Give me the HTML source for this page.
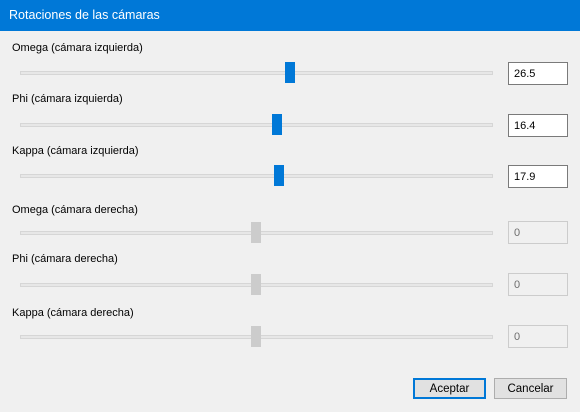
<!DOCTYPE html>
<html><head><meta charset="utf-8"><style>
*{margin:0;padding:0;box-sizing:border-box}
body{width:580px;height:412px;background:#f0f0f0;font-family:"Liberation Sans",sans-serif;font-size:11px;color:#000;position:relative;overflow:hidden}
.title{position:absolute;left:0;top:0;width:580px;height:31px;background:#0078d7;color:#fff;font-size:12.5px;line-height:31px;padding-left:9px}
.lbl{position:absolute;left:12px}
.trk{position:absolute;left:20px;width:473px;height:4px;background:#e7e7e7;border:1px solid #d6d6d6}
.th{position:absolute;width:10px;height:21px;background:#0078d7}
.th.d{background:#cccccc}
.tb{position:absolute;left:508px;width:60px;height:23px;background:#fff;border:1px solid #7a7a7a;padding-left:5px;padding-top:1px;line-height:21px;font-size:11px}
.tb.d{background:#f0f0f0;border-color:#cccccc;color:#6d6d6d}
.btn{position:absolute;top:378px;width:73px;height:21px;background:#e1e1e1;border:1px solid #adadad;text-align:center;line-height:21px;font-size:11.5px}
</style></head><body>
<div class="title">Rotaciones de las cámaras</div>

<div class="lbl" style="top:42px">Omega (cámara izquierda)</div>
<div class="trk" style="top:71px"></div><div class="th" style="left:285px;top:62px"></div>
<div class="tb" style="top:62px">26.5</div>

<div class="lbl" style="top:93px">Phi (cámara izquierda)</div>
<div class="trk" style="top:123px"></div><div class="th" style="left:272px;top:114px"></div>
<div class="tb" style="top:114px">16.4</div>

<div class="lbl" style="top:145px">Kappa (cámara izquierda)</div>
<div class="trk" style="top:174px"></div><div class="th" style="left:274px;top:165px"></div>
<div class="tb" style="top:165px">17.9</div>

<div class="lbl" style="top:204px">Omega (cámara derecha)</div>
<div class="trk" style="top:231px"></div><div class="th d" style="left:251px;top:222px"></div>
<div class="tb d" style="top:221px">0</div>

<div class="lbl" style="top:253px">Phi (cámara derecha)</div>
<div class="trk" style="top:283px"></div><div class="th d" style="left:251px;top:274px"></div>
<div class="tb d" style="top:273px">0</div>

<div class="lbl" style="top:307px">Kappa (cámara derecha)</div>
<div class="trk" style="top:335px"></div><div class="th d" style="left:251px;top:326px"></div>
<div class="tb d" style="top:325px">0</div>

<div class="btn" style="left:413px;border:2px solid #0078d7;line-height:19px">Aceptar</div>
<div class="btn" style="left:494px">Cancelar</div>
</body></html>
